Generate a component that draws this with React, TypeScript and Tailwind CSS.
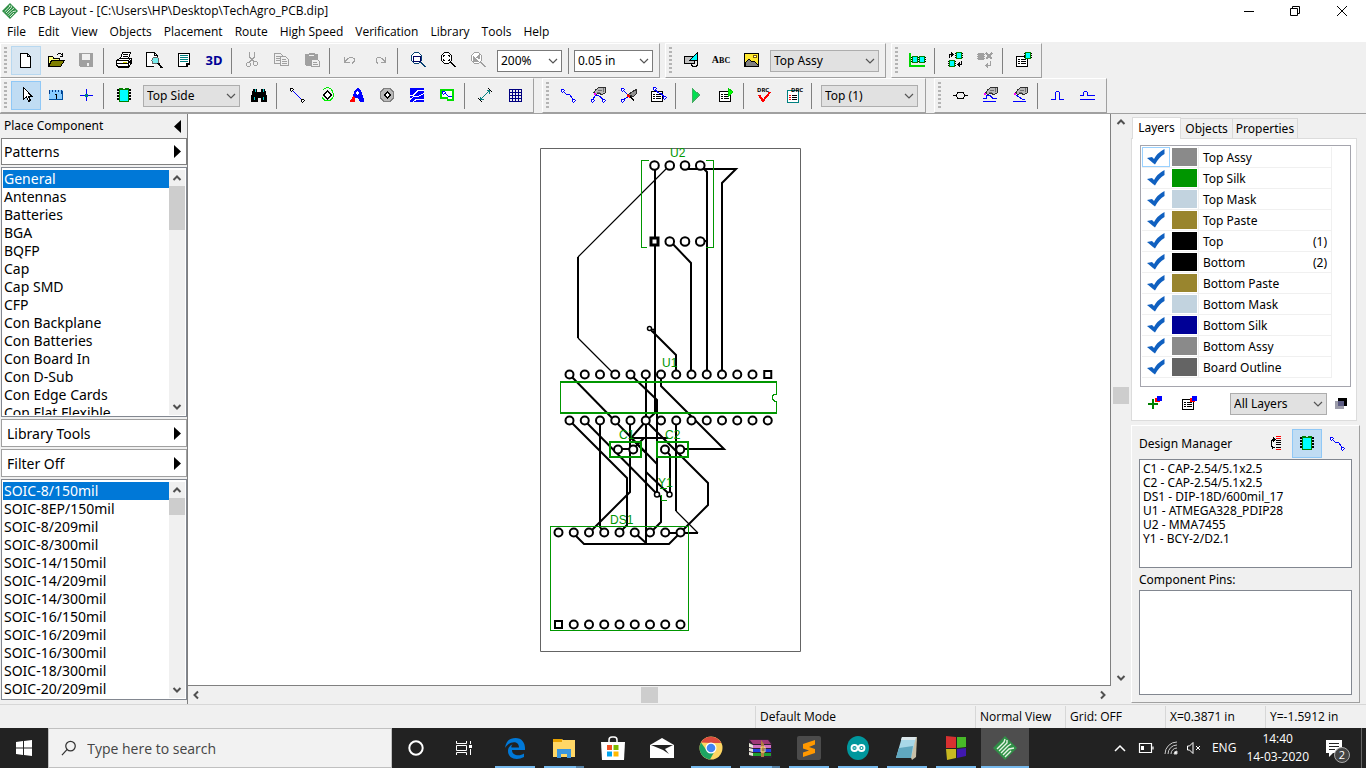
import type { ReactNode } from "react";
import clsx from "clsx";

const UI_FONT = "font-['Open_Sans','Noto_Sans',sans-serif]";
const LIST_FONT = "font-['Noto_Sans','Open_Sans',sans-serif]";

const menus = [
  "File",
  "Edit",
  "View",
  "Objects",
  "Placement",
  "Route",
  "High Speed",
  "Verification",
  "Library",
  "Tools",
  "Help",
];

const categories = [
  "General",
  "Antennas",
  "Batteries",
  "BGA",
  "BQFP",
  "Cap",
  "Cap SMD",
  "CFP",
  "Con Backplane",
  "Con Batteries",
  "Con Board In",
  "Con D-Sub",
  "Con Edge Cards",
  "Con Flat Flexible",
];

const patterns = [
  "SOIC-8/150mil",
  "SOIC-8EP/150mil",
  "SOIC-8/209mil",
  "SOIC-8/300mil",
  "SOIC-14/150mil",
  "SOIC-14/209mil",
  "SOIC-14/300mil",
  "SOIC-16/150mil",
  "SOIC-16/209mil",
  "SOIC-16/300mil",
  "SOIC-18/300mil",
  "SOIC-20/209mil",
];

const layers = [
  { name: "Top Assy", color: "bg-[#8a8a8a]" },
  { name: "Top Silk", color: "bg-[#009600]" },
  { name: "Top Mask", color: "bg-[#c2d3df]" },
  { name: "Top Paste", color: "bg-[#99852e]" },
  { name: "Top", color: "bg-black", index: "(1)" },
  { name: "Bottom", color: "bg-black", index: "(2)" },
  { name: "Bottom Paste", color: "bg-[#99852e]" },
  { name: "Bottom Mask", color: "bg-[#c2d3df]" },
  { name: "Bottom Silk", color: "bg-[#000096]" },
  { name: "Bottom Assy", color: "bg-[#8a8a8a]" },
  { name: "Board Outline", color: "bg-[#646464]" },
];

const components = [
  "C1 - CAP-2.54/5.1x2.5",
  "C2 - CAP-2.54/5.1x2.5",
  "DS1 - DIP-18D/600mil_17",
  "U1 - ATMEGA328_PDIP28",
  "U2 - MMA7455",
  "Y1 - BCY-2/D2.1",
];

/* ---------- icons ---------- */

const smallChip = (x: number, y: number, fill: string, line: string) => (
  <>
    <path
      d={`M${x - 1} ${y + 1.5}h8M${x - 1} ${y + 3.5}h8M${x - 1} ${y + 5.5}h8`}
      stroke={line === "#a0a0a0" ? line : "#000"}
    />
    <rect x={x + 0.5} y={y + 0.5} width="5" height="6" fill={fill} stroke={line} />
  </>
);

const sheet = (
  <>
    <path d="M2.5 5.5h11v10h-11z" fill="#fff" stroke="#000" />
    <path d="M4 8.5h2M7 8.5h5M4 10.5h2M7 10.5h5M4 12.5h2M7 12.5h5" stroke="#000" />
  </>
);

const hand = (
  <>
    <path d="M5 6.5l2-3 3-2h6.5v5l-3 2-4-1-3 1z" fill="#b8b8b8" stroke="#303030" />
    <path d="M9 4.5h4M8 6.5h3M14.5 2v4" stroke="#707070" />
  </>
);

/* small open node drawn at a track end */
const node = (x: number, y: number, color: string) => (
  <rect x={x - 1.5} y={y - 1.5} width="3" height="3" rx="1" fill="#fff" stroke={color} />
);

const lens = (color: string, inner: ReactNode) => (
  <>
    <circle cx="7.5" cy="7" r="5.5" fill="#fff" stroke={color} />
    <path d="M11.5 11l5 5" stroke={color} strokeWidth="2" />
    {inner}
  </>
);

const icons: Record<string, ReactNode> = {
  newFile: <path d="M3.5 2.5h7l3 3v11h-10zM10.5 2.5v3h3" fill="#fff" stroke="#000" />,
  open: (
    <>
      <path d="M1.5 15.5v-10h4l1 1.5h6v2.5" fill="#ffff80" stroke="#000" />
      <path d="M1.5 15.5l3-6h13l-4 6z" fill="#808000" stroke="#000" />
      <path d="M9.5 4.5l2-2h2l2 2M15.5 2v3h-3" fill="none" stroke="#000" />
    </>
  ),
  save: (
    <>
      <path d="M2 2h14v14H3l-1-1z" fill="#a0a0a0" />
      <path d="M5 3h8v6H5zM10 12h2v3h-2z" fill="#f0f0f0" />
    </>
  ),
  print: (
    <>
      <path d="M5.5 7.5l2-6h8l-2 6" fill="#fff" stroke="#000" />
      <path d="M8 3.5h5M7.5 5.5h5" stroke="#000" />
      <path d="M1.5 9.5l3-2h12v5l-3 3.5h-10l-2-2z" fill="#fff" stroke="#000" />
      <path d="M2 9.5h11l3-2M2 12.5h11l3-3M13.5 10v6M15 9v4" stroke="#000" fill="none" />
      <path d="M4 15.5h9" stroke="#000" strokeWidth="2" />
      <path d="M8 11h4" stroke="#dd0" />
    </>
  ),
  preview: (
    <>
      <path d="M9 15.5H1.5v-14h8l3 3v3M9.5 1.5v3h3" fill="#fff" stroke="#000" />
      <circle cx="10.5" cy="9.5" r="3.5" fill="#7ee" stroke="#666" />
      <path d="M13 12l4 5" stroke="#000" strokeWidth="2" />
    </>
  ),
  report: (
    <>
      <path d="M3.5 2.5h11v11h-2v2h-9z" fill="#fff" stroke="#000" />
      <path d="M5 4.5h8M5 6.5h8M5 8.5h8M5 10.5h8" stroke="#008080" />
      <path d="M3 15.5h9M11.5 15v-2.5h3" fill="none" stroke="#000" />
    </>
  ),
  cut: (
    <>
      <path d="M6.5 1v5l5 5M11.5 1v5l-5 5" fill="none" stroke="#a0a0a0" />
      <circle cx="5.5" cy="13.5" r="2" fill="none" stroke="#a0a0a0" />
      <circle cx="12.5" cy="12.5" r="2" fill="none" stroke="#a0a0a0" />
    </>
  ),
  copy: (
    <>
      <path d="M1.5 2.5h6l2 2v8h-8zM3 5.5h4M3 7.5h5M3 9.5h5" fill="none" stroke="#a0a0a0" />
      <path d="M7.5 5.5h5l3 3v6h-8z" fill="#f0f0f0" stroke="#a0a0a0" />
      <path d="M9 8.5h4M9 10.5h5M9 12.5h5" stroke="#a0a0a0" />
    </>
  ),
  paste: (
    <>
      <path d="M2 3h4l1-1.5h4L12 3h3v6H8v6H3l-1-1z" fill="#a0a0a0" />
      <path d="M8.5 8.5h6l2 2v5h-8z" fill="#f0f0f0" stroke="#a0a0a0" />
      <path d="M10 11.5h4M10 13.5h5" stroke="#a0a0a0" />
      <path d="M6 4.5h5" stroke="#f0f0f0" />
    </>
  ),
  undo: <path d="M3.5 6v5h5M4 10.5l3-3q1-1 3-1t3 1v3l-2 2" fill="none" stroke="#a0a0a0" />,
  redo: <path d="M14.5 6v5h-5M14 10.5l-3-3q-1-1-3-1T5 7.5v3l2 2" fill="none" stroke="#a0a0a0" />,
  zoomWindow: lens("#064070", <path d="M4 5h7v5H4z" fill="#fff" stroke="#000060" strokeWidth="1" />),
  zoomFit: lens("#000", <path d="M4.5 6V4.5H6M10.5 6V4.5H9M4.5 8v1.5H6M10.5 8v1.5H9" fill="none" stroke="#000" />),
  zoomPrev: lens("#a0a0a0", <path d="M4 5v5h5zM7 7l3-3v4" fill="#a0a0a0" stroke="#a0a0a0" />),
  shapes: (
    <>
      <circle cx="12.5" cy="12" r="3.5" fill="#e8e8e8" stroke="#000" />
      <path d="M2.5 5.5h10v7h-10z" fill="#c0c0c0" stroke="#000" />
      <path d="M15.5 1.5v8h-8z" fill="#0ff" stroke="#000" />
    </>
  ),
  image: (
    <>
      <path d="M2.5 2.5h14v13h-14z" fill="#ffe830" stroke="#000" />
      <path d="M3 15v-3l4-4 3 3 2-1 4 4v1z" fill="#808080" stroke="#000" />
      <circle cx="13" cy="5.5" r="1.5" fill="#fff" stroke="#806000" />
    </>
  ),
  chipsLine: (
    <>
      <path d="M2 2v13h15" fill="none" stroke="#00d800" strokeWidth="2" />
      {smallChip(4, 5, "#0ff", "#008000")}
      {smallChip(11, 5, "#0ff", "#008000")}
    </>
  ),
  swapChips: (
    <>
      {smallChip(10, 1, "#0ff", "#008000")}
      {smallChip(3, 9, "#0ff", "#008000")}
      <path d="M3.5 7V3.5H7M5 1.5l2 2-2 2M15.5 10v3.5H12M14 11.5l-2 2 2 2" fill="none" stroke="#000" />
    </>
  ),
  swapChipsOff: (
    <>
      {smallChip(2, 2, "#a0a0a0", "#a0a0a0")}
      <path d="M10 2l6 6M16 2l-6 6M11 5h4" stroke="#a0a0a0" strokeWidth="2" />
      <path d="M14.5 10v4.5H11M12 12.5l-2 2 2 2" fill="none" stroke="#a0a0a0" />
    </>
  ),
  chipSheet: (
    <>
      {sheet}
      {smallChip(11, 1, "#0ff", "#008000")}
    </>
  ),
  pointer: <path d="M6.5 1.5v12l3-3 2 5 2-1-2-4h3.5z" fill="#fff" stroke="#000" />,
  ruler: (
    <>
      <path d="M2 4h14v10H2z" fill="#8cf" />
      <path d="M2.5 4v4M5.5 4v2M8.5 4v2M11.5 4v2M14.5 4v4" fill="none" stroke="#003c8c" />
      <path d="M8 8.5h1.5v4" fill="none" stroke="#000" />
      <path d="M2 13.5h13.5V5" fill="none" stroke="#0050a0" />
    </>
  ),
  origin: (
    <>
      <path d="M9.5 3v12M3 9.5h13" stroke="#00f" />
      <path d="M8 8h3v3H8z" fill="#008080" />
    </>
  ),
  chip: (
    <>
      <path d="M2 4h14M2 7h14M2 10h14M2 13h14" stroke="#000" strokeWidth="2" />
      <path d="M4 2h4v1h2V2h4v14H4z" fill="#008000" />
      <path d="M5 4h8v11H5z" fill="#0ff" />
    </>
  ),
  binoculars: (
    <>
      <path d="M3 3h4v3h4V3h4l2 8v5h-6v-4H8v4H1v-5z" fill="#000" />
      <path d="M5.5 3v3M13.5 3v3M4.5 11v3M13.5 11v3" stroke="#0cc" />
    </>
  ),
  track: (
    <>
      <path d="M4 4l10 10" stroke="#00f" />
      {node(3.5, 3.5, "#000")}
      {node(14.5, 14.5, "#000")}
    </>
  ),
  viaGreen: (
    <>
      <path d="M5 4q3-4 8-1 3 3 2 8-1 3-5 4-4 0-6-4" fill="none" stroke="#0e0" />
      <path d="M9.5 5l4 4-4 4-4-4z" fill="#fff" stroke="#000" strokeWidth="2" />
    </>
  ),
  trackTri: (
    <>
      <path d="M7 6l-3 6-2 2v2h5v-4z" fill="#f00" />
      <path d="M5 9l2-5 2-2h2l2 3 3 8v3h-4l-2-4H7z" fill="#00f" />
      <path d="M9.5 5l2 2-2 2-2-2z" fill="#fff" />
    </>
  ),
  viaGray: (
    <>
      <path d="M6 2.5h6l3.500 3.500v6l-3.500 3.500H6L2.500 12V6z" fill="#b8b8b8" stroke="#808080" />
      <path d="M9 5l4 4-4 4-4-4z" fill="#000" />
      <path d="M9 7l2 2-2 2-2-2z" fill="#fff" />
    </>
  ),
  copper: (
    <>
      <path d="M2 2h14v14H2z" fill="#00f" />
      <path d="M2 9.5h3l5-5h6M2 13.5l4-3h4l6-3M5 16l4-3h7" fill="none" stroke="#fff" />
    </>
  ),
  boardShape: (
    <>
      <path d="M3 4h12v10h-5l-1-2H3z" fill="#fff" stroke="#00e000" strokeWidth="2" />
      <path d="M6 6l4 4h4" fill="none" stroke="#00f" />
      {node(5.5, 6.5, "#00f")}
    </>
  ),
  dimension: (
    <>
      <path d="M4 14L14 4M4.5 10.5v3h3M13.5 7.5v-3h-3" fill="none" stroke="#008080" />
      <path d="M2 12l4 4M12 2l4 4" stroke="#000" />
    </>
  ),
  grid: (
    <path
      d="M3.5 3.5h12v12h-12zM3 6.5h13M3 9.5h13M3 12.5h13M6.5 3v13M9.5 3v13M12.5 3v13"
      fill="none"
      stroke="#000080"
    />
  ),
  route: (
    <>
      <path d="M4 5l3 3h3l4 5" fill="none" stroke="#00f" />
      {node(3.5, 4.5, "#00f")}
      {node(14.5, 14.5, "#00f")}
    </>
  ),
  routeHand: (
    <>
      {hand}
      <path d="M4 13l3-4h2l6 5" fill="none" stroke="#00f" />
      {node(3.5, 14.5, "#00f")}
      {node(14.5, 14.5, "#00f")}
      <path d="M5 7h2v2H5z" fill="#f0f" />
    </>
  ),
  unroute: (
    <>
      <path d="M9.5 8.5l4-3 4-2v4l-3 3-4-1z" fill="#909090" stroke="#303030" />
      <path d="M4 4l5 5M4 14l6-4" stroke="#00f" />
      {node(3.5, 3.5, "#00f")}
      {node(3.5, 14.5, "#00f")}
      <path d="M8 9l3 2" stroke="#f00" strokeWidth="2" />
      <path d="M11 11l4 3" stroke="#000" strokeWidth="1.5" />
    </>
  ),
  routeSheet: (
    <>
      {sheet}
      <path d="M6 4l4 3h2l3 4" fill="none" stroke="#00f" />
      {node(5.5, 2.5, "#00f")}
      {node(15.5, 11.5, "#00f")}
    </>
  ),
  run: <path d="M5.500 2.500l7 6.500-7 7z" fill="#00e050" stroke="#40b060" />,
  runSheet: (
    <>
      {sheet}
      <path d="M11 2l5 4-5 5z" fill="#0f0" stroke="#00d000" />
    </>
  ),
  drcCheck: <path d="M4 9l4 6 7-9" fill="none" stroke="#f00" strokeWidth="2" />,
  drcSheet: (
    <>
      <path d="M2.5 4.5h11v12h-11z" fill="#fff" stroke="#008080" />
      <path d="M4 9.5h2M4 11.5h2M4 13.5h2" stroke="#f00" />
      <path d="M7 9.5h5M7 11.5h5M7 13.5h5" stroke="#000" />
    </>
  ),
  diffPair: <path d="M2 9.5h3l2-3h5l2 3h3M5 9.5l2 3h5l2-3" fill="#f0f0f0" stroke="#000" />,
  pairHand: (
    <>
      {hand}
      <path d="M2 12.5h3l1-3h3l3 3h4M2 15.5h13" fill="none" stroke="#00f" />
      <path d="M3 7h2v2H3z" fill="#f0f" />
    </>
  ),
  pairHandAlt: (
    <>
      {hand}
      <path d="M5 9l6 4h3M2 15.5h13" fill="none" stroke="#00f" />
      <path d="M3 7h2v2H3z" fill="#f0f" />
    </>
  ),
  meander: <path d="M2 13.5h4.500v-7l1-1h2l1 1v7H15" fill="none" stroke="#00f" />,
  meanderPair: <path d="M1 9.5h3.500v-3l1-1h2l1 1v3H16M1 13.5h15" fill="none" stroke="#00f" />,
  addLayer: (
    <>
      <path d="M7 5v10M2 10h10" stroke="#008000" strokeWidth="2" />
      <path d="M9 4h5v4H9z" fill="#f00" />
      <path d="M11 2h5v5h-5z" fill="#00f" />
    </>
  ),
  layerSheet: (
    <>
      {sheet}
      <path d="M10 4h5v4h-5z" fill="#f00" />
      <path d="M12 2h5v5h-5z" fill="#00f" />
    </>
  ),
  overlap: (
    <>
      <path d="M7 3h9v8H7z" fill="#000" />
      <path d="M4 6h9v8H4z" fill="#9c9caa" />
      <path d="M7 6h6v5H7z" fill="#5c5c84" />
    </>
  ),
  sortList: (
    <>
      <path d="M8 2.5h5M8 4.5h5M8 15.5h5" stroke="#f00" />
      <path d="M8 6.5h5M8 8.5h5M8 10.5h5M8 13.5h5" stroke="#000" />
      <path d="M6 5.5H4.5l-1 2v4l1 2H7M5 3.5l2 2-2 2M4 15l2-2" fill="none" stroke="#000" />
    </>
  ),
};

const Icon = ({ name }: { name: string }) => (
  <svg viewBox="0 0 18 18" className="size-[18px] shrink-0" shapeRendering="crispEdges" aria-hidden="true">
    {icons[name]}
  </svg>
);

const Chevron = ({ className }: { className?: string }) => (
  <svg viewBox="0 0 10 6" className={clsx("h-1.5 w-2.5", className)} aria-hidden="true">
    <path d="M1 1l4 4 4-4" fill="none" stroke="#555" strokeWidth="1.200" />
  </svg>
);

/* ---------- toolbar parts ---------- */

type ToolProps = { label: string; icon?: string; state?: "hot" | "on"; children?: ReactNode };

const Tool = ({ label, icon, state, children }: ToolProps) => (
  <button
    aria-label={label}
    className={clsx(
      "flex h-[29px] w-[30px] shrink-0 items-start justify-center border pt-1",
      state === "on" && "border-[#90c8f6] bg-[#c0dcf3]",
      state === "hot" && "border-[#b8d8f0] bg-[#d8e6f2]",
      !state && "border-transparent"
    )}
  >
    {icon && <Icon name={icon} />}
    {children}
  </button>
);

const Sep = () => (
  <div className="w-2 shrink-0 pl-0.5">
    <div className="h-[26px] w-px bg-[#808080]" />
  </div>
);

const Band = ({ children }: { children: ReactNode }) => (
  <div className="flex h-[35px] shrink-0 items-center border-b border-r border-b-[#a0a0a0] border-r-[#a0a0a0] border-l border-t border-l-white border-t-white px-[3px]">
    <div className="mr-1 h-[27px] w-[3px] bg-[repeating-linear-gradient(180deg,#b4b4b4_0_2px,transparent_2px_4px)]" />
    {children}
  </div>
);

type DropProps = { label: string; value: string; className?: string; flat?: boolean };

const Drop = ({ label, value, className, flat }: DropProps) => (
  <label className={clsx("relative block shrink-0", className)}>
    <span className="sr-only">{label}</span>
    <select
      className={clsx(
        "block h-[22px] w-full appearance-none border pl-[3px] text-[12px] leading-5 text-black",
        flat ? "border-[#adadad] bg-[#e1e1e1]" : "border-[#7a7a7a] bg-white"
      )}
    >
      <option>{value}</option>
    </select>
    <Chevron className="pointer-events-none absolute right-1 top-2" />
  </label>
);

/* ---------- scroll bars ---------- */

const ScrollArrow = ({ label, path }: { label: string; path: string }) => (
  <button aria-label={label} className="flex size-4 shrink-0 items-center justify-center">
    <svg viewBox="0 0 10 10" className="size-2.5">
      <path d={path} fill="none" stroke="#505050" strokeWidth="2" />
    </svg>
  </button>
);

const UP = "M1.5 7L5 3.5 8.5 7";
const DOWN = "M1.5 3L5 6.5 8.5 3";
const LEFT = "M7 1.5L3.5 5 7 8.5";
const RIGHT = "M3 1.5L6.5 5 3 8.5";

const VScroll = ({ thumb }: { thumb: string }) => (
  <div className="flex w-4 shrink-0 flex-col bg-[#f0f0f0]">
    <ScrollArrow label="Scroll up" path={UP} />
    <div className="flex-1">
      <div className={clsx("w-full bg-[#cdcdcd]", thumb)} />
    </div>
    <ScrollArrow label="Scroll down" path={DOWN} />
  </div>
);

const PickList = ({ items, thumb, className }: { items: string[]; thumb: string; className: string }) => (
  <div className={clsx("flex min-h-0 border border-[#828790] bg-white p-px pt-0.5", className)}>
    <ul className="min-w-0 flex-1 overflow-hidden">
      {items.map((item, i) => (
        <li key={item}>
          <button
            className={clsx(
              "block h-[18px] w-full pl-px text-left text-[14px] leading-[18px] whitespace-nowrap",
              i === 0 && "bg-[#0078d7] text-white"
            )}
          >
            {item}
          </button>
        </li>
      ))}
    </ul>
    <VScroll thumb={thumb} />
  </div>
);

const FoldButton = ({ label, className }: { label: string; className?: string }) => (
  <button
    className={clsx(
      "flex w-full shrink-0 items-center justify-between border bg-white pr-[5px] text-[14px]",
      className
    )}
  >
    {label}
    <svg viewBox="0 0 7 13" className="h-[13px] w-[7px]">
      <path d="M0 0l7 6.500L0 13z" />
    </svg>
  </button>
);

const PlacePanel = () => (
  <aside className="flex w-[188px] shrink-0 flex-col border-r border-[#808080] bg-[#f0f0f0] pb-1 pl-px">
    <div className="flex h-6 shrink-0 items-center justify-between pl-[3px] pr-1.5 text-[12px]">
      Place Component
      <button aria-label="Collapse">
        <svg viewBox="0 0 7 13" className="h-[13px] w-[7px]">
          <path d="M7 0L0 6.500 7 13z" />
        </svg>
      </button>
    </div>
    <FoldButton label="Patterns" className="h-[27px] border-[#808080] pl-0.5" />
    <PickList items={categories} thumb="h-[44px]" className="mt-0.5 h-[250px]" />
    <FoldButton label="Library Tools" className="mt-0.5 h-7 border-[#a0a0a0] pl-[5px]" />
    <FoldButton label="Filter Off" className="mt-0.5 h-7 border-[#a0a0a0] pl-[5px]" />
    <PickList items={patterns} thumb="h-[17px]" className="mt-0.5 flex-1" />
  </aside>
);

/* ---------- board ---------- */

const PITCH = 15.25;

type PadRowProps = { x: number; y: number; count: number; square?: number; r?: number };

const PadRow = ({ x, y, count, square, r = 4 }: PadRowProps) => (
  <g fill="#fff" stroke="#000" strokeWidth="2">
    {Array.from({ length: count }, (_, i) =>
      i === square ? (
        <rect key={i} x={x + i * PITCH - 3.5} y={y - 3.5} width="7" height="7" strokeWidth={r > 4 ? 3 : 2} />
      ) : (
        <circle key={i} cx={x + i * PITCH} cy={y} r={r} />
      )
    )}
  </g>
);

const traces = [
  "M655 165V413L646 421",
  "M685 169H736L722 183V374",
  "M700 165L707 172V374",
  "M670 241L691 263V374",
  "M700 241H707",
  "M578 257V338",
  "M650 329L676 355V374",
  "M569.5 374.5L657 464",
  "M584.5 420.5L657 494",
  "M569.5 420.5L627 478V525L619 533",
  "M600 420V527L604 533",
  "M630 420V492L589 533",
  "M630.5 374.5L657 400V494",
  "M646 374V544",
  "M661 374V386L724 449H681",
  "M646 421L631 438H668",
  "M618 449H633L644 438",
  "M631 438L646 453",
  "M646 421L708 483V505L669 544H584L573 533",
  "M635 533L646 543",
  "M676 420V511",
  "M665 533H698",
  "M665 449L670 455V494",
  "M646 472L669 494",
  "M657 494L661 497V522L650 533",
];

const Board = () => (
  <svg
    viewBox="540 148 262 505"
    className="h-[505px] w-[262px] shrink-0 font-['Liberation_Sans',sans-serif]"
    role="img"
    aria-label="Board"
  >
    <path d="M540.5 148.5h260v503h-260z" fill="#fff" stroke="#646464" />
    <g fill="none" stroke="#000" strokeWidth="2">
      {traces.map((d) => (
        <path key={d} d={d} />
      ))}
    </g>
    <path d="M670 165L578 257M578 338L613 373M676 511L698 533" fill="none" stroke="#000" strokeWidth="1.200" />

    <PadRow x={654.5} y={165.5} count={4} r={4.3} />
    <PadRow x={654.5} y={241.5} count={4} square={0} r={4.3} />
    <PadRow x={569.5} y={374.5} count={14} square={13} />
    <PadRow x={569.5} y={420.5} count={14} />
    <PadRow x={618} y={449.5} count={2} />
    <PadRow x={665} y={449.5} count={2} />
    <PadRow x={558.5} y={532.5} count={9} />
    <PadRow x={558.5} y={624.5} count={9} square={0} />
    <g fill="#fff" stroke="#000" strokeWidth="1.500">
      <circle cx="657" cy="494.500" r="2.500" />
      <circle cx="669.500" cy="494.500" r="2.500" />
      <circle cx="649.500" cy="328.500" r="2" />
      <circle cx="653" cy="330.500" r="1.200" />
    </g>

    <g fill="none" stroke="#009600" shapeRendering="crispEdges">
      <path d="M649 160.5h-7.500v86.500h5.500M706 160.5h7.500v86.500h-7.500" />
      <path d="M776.5 394v-12h-216v31h216v-12M776.5 394h-2l-2 2v3l2 2h2" />
      <path d="M560 382h217M560 413h217" strokeWidth="2" />
      <path d="M610 442h31v15h-31zM657 442h31v15h-31z" strokeWidth="2" />
      <path d="M550.5 526.5h138v104h-138zM660 488.5h7M661.5 495v5h5" />
    </g>
    <g fill="#009600" fontSize="12">
      <text x="670" y="157">U2</text>
      <text x="662" y="367">U1</text>
      <text x="619" y="439">C1</text>
      <text x="665" y="439">C2</text>
      <text x="658" y="487">Y1</text>
      <text x="610" y="524">DS1</text>
    </g>
  </svg>
);

/* ---------- right side ---------- */

const Check = () => (
  <svg viewBox="0 0 18 16" className="h-4 w-[18px]" aria-hidden="true">
    <path d="M0 9l5-1 2 2Q10 4 17.500 0v5Q12 8 8 15.500L6 14z" fill="#1060c0" />
  </svg>
);

const LayersPanel = () => (
  <section>
    <div role="tablist" className="flex items-end pl-px text-[12px]">
      <button
        role="tab"
        aria-selected="true"
        className="relative z-10 -mb-px h-[22px] w-[49px] border border-b-0 border-[#dcdcdc] bg-white pb-0.5"
      >
        Layers
      </button>
      <button role="tab" className="h-5 w-[52px] border border-b-0 border-l-0 border-[#d9d9d9]">
        Objects
      </button>
      <button role="tab" className="h-5 w-[65px] border border-b-0 border-l-0 border-[#d9d9d9]">
        Properties
      </button>
    </div>
    <div className="mr-[3px] h-[283px] border border-[#dcdcdc] bg-white pl-2 pr-[5px] pt-1.5">
      <ul className="h-[242px] border border-[#a5a5ad] p-px text-[12px]">
        {layers.map((layer, i) => (
          <li key={layer.name} className="mr-[17px] flex h-[21px] items-center border-b border-r border-[#f0f0f0]">
            <label className="flex h-full flex-1 items-center">
              <input type="checkbox" defaultChecked className="sr-only" />
              <span
                className={clsx(
                  "flex h-full w-7 items-center justify-center border",
                  i === 0 ? "border-[#99d1ff]" : "border-transparent"
                )}
              >
                <Check />
              </span>
              <span className={clsx("ml-0.5 h-[18px] w-[25px]", layer.color)} />
              <span className="ml-px h-full w-px bg-[#f0f0f0]" />
              <span className="flex-1 pl-1 pt-px">{layer.name}</span>
              <span className="pr-1 pt-px">{layer.index}</span>
            </label>
          </li>
        ))}
      </ul>
      <div className="flex items-center pt-0.5">
        <Tool label="Add layer" icon="addLayer" />
        <div className="w-1" />
        <Tool label="Layer setup" icon="layerSheet" />
        <div className="flex-1" />
        <Drop label="Visible layers" value="All Layers" flat className="w-[97px]" />
        <button aria-label="Contrast mode" className="ml-1 mr-0.5">
          <Icon name="overlap" />
        </button>
      </div>
    </div>
  </section>
);

const DesignManager = () => (
  <section className="mt-1 flex flex-1 flex-col border-b border-r border-l border-t border-b-[#a0a0a0] border-r-[#a0a0a0] border-l-white border-t-white px-[7px] pb-[7px] pt-[3px] text-[12px]">
    <div className="flex items-center">
      <h2 className="flex-1 whitespace-nowrap">Design Manager</h2>
      <Tool label="Sort" icon="sortList" />
      <Tool label="Components" icon="chip" state="on" />
      <Tool label="Nets" icon="route" />
    </div>
    <ul className="mt-px h-[109px] border border-[#828790] bg-white px-[3px] py-0.5 leading-[14px]">
      {components.map((c) => (
        <li key={c}>{c}</li>
      ))}
    </ul>
    <h3 className="h-[22px] leading-[23px]">Component Pins:</h3>
    <div className="flex-1 border border-[#828790] bg-white" />
  </section>
);

/* ---------- taskbar ---------- */

const Logo = () => (
  <>
    <path d="M12 0l12 12-12 12L0 12z" fill="#2f8f46" />
    <path
      d="M4 13l7-7 1-3M6 15l8-8V4M8 17l7-7 3-2M10 19l6-6 5-1M12 21l6-6"
      fill="none"
      stroke="#e4f4e4"
      strokeWidth="1.400"
    />
  </>
);

const apps: { name: string; open?: boolean; active?: boolean; stacked?: boolean; art: ReactNode }[] = [
  {
    name: "Edge",
    open: true,
    art: (
      <path
        d="M2 12C3 5 7 2 12.500 2 19 2 22 7 22 12v2H9c0 6 8 6.500 12 3.500V21c-7 4-16 2-16-6 0-4 3-6 5-7-1 1-2 2-1.500 3.500H16C16 4 6 5 2 12z"
        fill="#0078d7"
      />
    ),
  },
  {
    name: "File Explorer",
    open: true,
    stacked: true,
    art: (
      <>
        <path d="M1 3h9l1 1h12v17H1z" fill="#ffd766" />
        <path d="M1 3h9v3H1z" fill="#e8a200" />
        <path d="M5 22v-9h14v9h-4v-4H9v4z" fill="#3a96dd" />
      </>
    ),
  },
  {
    name: "Store",
    art: (
      <>
        <path d="M8 6V4q0-3 3-3h2q3 0 3 3v2" fill="none" stroke="#fff" strokeWidth="1.500" />
        <path d="M0 6h24l-1 18H1z" fill="#fff" />
        <path d="M6 9h5v5H6z" fill="#f25022" />
        <path d="M12.500 9h5v5h-5z" fill="#7fba00" />
        <path d="M6 15.500h5v5H6z" fill="#00a4ef" />
        <path d="M12.500 15.500h5v5h-5z" fill="#ffb900" />
      </>
    ),
  },
  {
    name: "Mail",
    art: (
      <>
        <path d="M0 9l12-7 12 7v13H0z" fill="#fff" />
        <path d="M1 9h22l-8 4 4 5-6-4z" fill="#222" />
      </>
    ),
  },
  {
    name: "Chrome",
    open: true,
    art: (
      <>
        <circle cx="12" cy="12" r="11.500" fill="#fdd663" />
        <path d="M2 6.500A11.500 11.500 0 0 1 22.300 7H12z" fill="#dd4b3e" />
        <path d="M2 6.500A11.500 11.500 0 0 0 11 23.500l5-9-9-1z" fill="#1da462" />
        <circle cx="12" cy="12" r="5.500" fill="#fff" />
        <circle cx="12" cy="12" r="4.300" fill="#4285f4" />
      </>
    ),
  },
  {
    name: "WinRAR",
    open: true,
    stacked: true,
    art: (
      <>
        <path d="M1 3h19l4 4v15H4l-3-3z" fill="#302030" />
        <path d="M2 4h18l3 4H5z" fill="#a03878" />
        <path d="M5 9h18v3H5z" fill="#d070c0" />
        <path d="M5 13h18v3H5z" fill="#2040e0" />
        <path d="M5 17h18v3H5z" fill="#20a030" />
        <path d="M1 7l4 2v3l-4-1zM1 12l4 1v3l-4-1zM1 16l4 1v3l-4-1z" fill="#e8e8d8" />
        <path d="M13 4l3 4v13h-3z" fill="#b08040" />
        <path d="M13 11h4v5h-4z" fill="none" stroke="#ffe080" />
      </>
    ),
  },
  {
    name: "Sublime Text",
    open: true,
    art: (
      <>
        <rect width="24" height="24" rx="2" fill="#4b4b4b" />
        <path d="M18 4v4.500L12 11l6 2v4L6 21v-4.500l6-2-6-2V8z" fill="#ff9800" />
      </>
    ),
  },
  {
    name: "Arduino",
    open: true,
    art: (
      <>
        <ellipse cx="12" cy="12" rx="11" ry="12" fill="#00979d" />
        <circle cx="8.500" cy="12" r="3" fill="none" stroke="#fff" strokeWidth="1.800" />
        <circle cx="15.500" cy="12" r="3" fill="none" stroke="#fff" strokeWidth="1.800" />
        <path d="M7.500 12h2M14.500 12h2M15.500 11v2" stroke="#fff" />
      </>
    ),
  },
  {
    name: "Notepad",
    open: true,
    art: (
      <>
        <path d="M7 1h15l-1 20-4 3z" fill="#c8c0a8" />
        <path d="M7 1h14l-5 21H1z" fill="#a8d8e8" />
        <path d="M4 12l14-2-2 12H1z" fill="#60a8c0" />
        <path d="M7 1h14l-1 3H6z" fill="#dce8ec" />
      </>
    ),
  },
  {
    name: "DipTrace Launcher",
    open: true,
    art: (
      <>
        <path d="M2 0l10 1v11H2z" fill="#d83030" />
        <path d="M13 1h9v10l-9 1z" fill="#48b828" />
        <path d="M2 13h10v9l-9 2z" fill="#c8b820" />
        <path d="M13 13l9-1v8l-9 2z" fill="#4018b0" />
      </>
    ),
  },
  { name: "DipTrace PCB", open: true, active: true, art: <Logo /> },
];

const Taskbar = () => (
  <footer className="flex h-10 shrink-0 bg-[#222] font-['Open_Sans',sans-serif] text-white">
    <button aria-label="Start" className="flex w-12 items-center justify-center">
      <svg viewBox="0 0 16 16" className="size-4" fill="#fff">
        <path d="M0 2l7-1v6.500H0zM8 1l8-1v7.500H8zM0 8.500h7V15l-7-1zM8 8.500h8V16l-8-1z" />
      </svg>
    </button>
    <label className="flex w-[344px] items-center border border-[#c0c0c0] bg-[#f2f2f2] pl-3">
      <svg viewBox="0 0 16 16" className="size-4" fill="none" stroke="#333" strokeWidth="1.300">
        <circle cx="10" cy="6" r="5" />
        <path d="M6.500 9.500L1 15.500" />
      </svg>
      <span className="sr-only">Search</span>
      <input
        placeholder="Type here to search"
        className="w-full bg-transparent pl-[11px] text-[14px] outline-none placeholder:text-[#444]"
      />
    </label>
    <button aria-label="Cortana" className="flex w-12 items-center justify-center">
      <svg viewBox="0 0 16 16" className="size-4">
        <circle cx="8" cy="8" r="6.700" fill="none" stroke="#fff" strokeWidth="2" />
      </svg>
    </button>
    <button aria-label="Task View" className="mr-[3px] flex w-12 items-center justify-center">
      <svg viewBox="0 0 16 16" className="size-4" fill="none" stroke="#fff">
        <path d="M.500 1v2.500h10V1M.500 5.500h10v5H.500zM.500 15v-2.500h10V15M14.500 1v3M14.500 9v6" />
        <path d="M13 5h3v3h-3z" fill="#fff" stroke="none" />
      </svg>
    </button>
    <nav className="flex gap-px">
      {apps.map((app) => (
        <button
          key={app.name}
          aria-label={app.name}
          className={clsx("relative flex w-12 items-center justify-center", app.active && "bg-[#4e4e4e]")}
        >
          <svg viewBox="0 0 24 24" className="size-6">
            {app.art}
          </svg>
          {app.open && (
            <span
              className={clsx(
                "absolute bottom-0 flex h-0.5 justify-end bg-[#76b9ed]",
                app.active ? "inset-x-0" : "inset-x-1"
              )}
            >
              {app.stacked && <span className="h-full w-2 bg-[#5580a4]" />}
            </span>
          )}
        </button>
      ))}
    </nav>
    <div className="ml-auto flex items-center text-[12px]">
      <button aria-label="Hidden icons" className="mr-3">
        <svg viewBox="0 0 12 8" className="h-2 w-3">
          <path d="M1 7l5-5 5 5" fill="none" stroke="#fff" strokeWidth="1.500" />
        </svg>
      </button>
      <button aria-label="Battery" className="mr-2.5">
        <svg viewBox="0 0 16 10" className="h-2.5 w-4" fill="none" stroke="#fff">
          <path d="M1.500.500h12v9h-12zM15 3.500v3" strokeWidth="1.200" />
          <path d="M3 3h3v4H3z" fill="#fff" stroke="none" />
        </svg>
      </button>
      <button aria-label="Network" className="mr-2">
        <svg viewBox="0 0 14 14" className="size-3.5" fill="none" stroke="#ccc">
          <path d="M1 13A12 12 0 0 1 13 1M4 13a9 9 0 0 1 9-9M7 13a6 6 0 0 1 6-6" />
          <path d="M10 13a3 3 0 0 1 3-3v3z" fill="#fff" />
        </svg>
      </button>
      <button aria-label="Volume" className="mr-2.5">
        <svg viewBox="0 0 16 12" className="h-3 w-4" fill="none" stroke="#fff">
          <path d="M1.500 4v4h2l3.500 3.500V.500L3.500 4zM10 4l4 4M14 4l-4 4" />
        </svg>
      </button>
      <span className="mr-2.5">ENG</span>
      <time className="mr-4 text-center leading-[18px]">
        14:40
        <br />
        14-03-2020
      </time>
      <button aria-label="Notifications" className="mr-2.5 mt-2">
        <svg viewBox="0 0 26 26" className="size-[26px]">
          <path d="M1 1h16v13H8l-4 4v-4H1z" fill="#fff" />
          <path d="M4 4.500h10M4 7.500h10M4 10.500h6" stroke="#222" />
          <circle cx="17" cy="16" r="7.500" fill="#444" stroke="#aaa" />
          <text x="17" y="20" fontSize="11" fill="#fff" textAnchor="middle">
            2
          </text>
        </svg>
      </button>
      <div className="mr-1 h-10 w-px bg-[#666]" />
    </div>
  </footer>
);

/* ---------- page ---------- */

const TitleBar = () => (
  <header className={clsx("flex h-[22px] shrink-0 items-center pl-0.5 text-[12px]", UI_FONT)}>
    <svg viewBox="0 0 24 24" className="mr-[5px] size-4">
      <Logo />
    </svg>
    <h1 className="flex-1">PCB Layout - [C:\Users\HP\Desktop\TechAgro_PCB.dip]</h1>
    <div className="flex">
      <button aria-label="Minimize" className="flex w-[46px] items-center justify-center">
        <svg viewBox="0 0 10 10" className="size-2.5" fill="none" stroke="#000">
          <path d="M0 5.500h10" />
        </svg>
      </button>
      <button aria-label="Restore" className="flex w-[46px] items-center justify-center">
        <svg viewBox="0 0 10 10" className="size-2.5" fill="none" stroke="#000">
          <path d="M.500 2.500h7v7h-7zM2.500 2.500v-2h7v7h-2" />
        </svg>
      </button>
      <button aria-label="Close" className="flex w-12 items-center justify-center">
        <svg viewBox="0 0 10 10" className="size-2.5" fill="none" stroke="#000">
          <path d="M0 0l10 10M10 0L0 10" />
        </svg>
      </button>
    </div>
  </header>
);

const Toolbars = () => (
  <div className="shrink-0 bg-[#f0f0f0] pt-px">
    <div className="flex gap-[5px]">
      <Band>
        <Tool label="New" icon="newFile" state="hot" />
        <Tool label="Open" icon="open" />
        <Tool label="Save" icon="save" />
        <Sep />
        <Tool label="Print" icon="print" />
        <Tool label="Print preview" icon="preview" />
        <Tool label="Titles" icon="report" />
        <Tool label="3D preview">
          <span className="text-[13px] leading-[18px] font-bold text-[#000096]">3D</span>
        </Tool>
        <Sep />
        <Tool label="Cut" icon="cut" />
        <Tool label="Copy" icon="copy" />
        <Tool label="Paste" icon="paste" />
        <Sep />
        <Tool label="Undo" icon="undo" />
        <Tool label="Redo" icon="redo" />
        <Sep />
        <Tool label="Zoom window" icon="zoomWindow" />
        <Tool label="Zoom to fit" icon="zoomFit" />
        <Tool label="Previous zoom" icon="zoomPrev" />
        <Drop label="Zoom" value="200%" className="mx-1 w-[65px]" />
        <Sep />
        <Drop label="Grid" value="0.05 in" className="mr-[3px] w-[79px]" />
      </Band>
      <Band>
        <Tool label="Shapes" icon="shapes" />
        <Tool label="Text">
          <span className="font-['Liberation_Serif',serif] text-[10px] leading-[18px] font-bold">
            A<span className="text-[8px]">BC</span>
          </span>
        </Tool>
        <Tool label="Image" icon="image" />
        <Drop label="Drawing layer" value="Top Assy" flat className="ml-1 mr-[3px] w-[109px]" />
      </Band>
      <Band>
        <Tool label="Arrange" icon="chipsLine" />
        <Sep />
        <Tool label="Auto placement" icon="swapChips" />
        <Tool label="Placement off" icon="swapChipsOff" />
        <Sep />
        <Tool label="Placement setup" icon="chipSheet" />
      </Band>
    </div>
    <div className="flex gap-2">
      <Band>
        <Tool label="Select" icon="pointer" state="on" />
        <Tool label="Measure" icon="ruler" />
        <Tool label="Origin" icon="origin" />
        <Sep />
        <Tool label="Place component" icon="chip" />
        <Drop label="Side" value="Top Side" flat className="mx-1 w-[97px]" />
        <Tool label="Find" icon="binoculars" />
        <Sep />
        <Tool label="Ratline" icon="track" />
        <Tool label="Pad" icon="viaGreen" />
        <Tool label="Net" icon="trackTri" />
        <Tool label="Via" icon="viaGray" />
        <Tool label="Copper pour" icon="copper" />
        <Tool label="Board outline" icon="boardShape" />
        <Sep />
        <Tool label="Dimension" icon="dimension" />
        <Tool label="Grid" icon="grid" />
      </Band>
      <Band>
        <Tool label="Route" icon="route" />
        <Tool label="Edit traces" icon="routeHand" />
        <Tool label="Unroute" icon="unroute" />
        <Tool label="Route setup" icon="routeSheet" />
        <Sep />
        <Tool label="Run autorouter" icon="run" />
        <Tool label="Autorouter setup" icon="runSheet" />
        <Sep />
        <Tool label="Check rules">
          <span className="relative">
            <Icon name="drcCheck" />
            <span className="absolute left-0.5 top-0 text-[6px] leading-[8px] font-bold">DRC</span>
          </span>
        </Tool>
        <Tool label="Rules setup">
          <span className="relative">
            <Icon name="drcSheet" />
            <span className="absolute left-1.5 top-0 text-[6px] leading-[8px] font-bold">DRC</span>
          </span>
        </Tool>
        <Sep />
        <Drop label="Route layer" value="Top (1)" flat className="mx-1 w-[97px]" />
      </Band>
      <Band>
        <Tool label="Differential pair" icon="diffPair" />
        <Tool label="Edit pair" icon="pairHand" />
        <Tool label="Edit pair trace" icon="pairHandAlt" />
        <Sep />
        <Tool label="Meander" icon="meander" />
        <Tool label="Pair meander" icon="meanderPair" />
      </Band>
    </div>
  </div>
);

const StatusBar = () => (
  <div
    className={clsx(
      "flex h-6 shrink-0 items-center justify-end border-t border-[#d7d7d7] bg-[#f0f0f0] pr-px text-[12px] leading-[22px]",
      UI_FONT
    )}
  >
    <span className="w-[220px] border-l border-[#d7d7d7] pl-1">Default Mode</span>
    <span className="w-[90px] border-l border-[#d7d7d7] pl-1">Normal View</span>
    <span className="w-[100px] border-l border-[#d7d7d7] pl-1">Grid: OFF</span>
    <span className="w-[100px] border-l border-[#d7d7d7] pl-1">X=0.3871 in</span>
    <span className="w-[100px] border-l border-[#d7d7d7] pl-1">Y=-1.5912 in</span>
  </div>
);

export default function App() {
  return (
    <div className={clsx("flex h-screen flex-col overflow-hidden bg-white text-black", LIST_FONT)}>
      <TitleBar />
      <nav className={clsx("flex h-5 shrink-0 items-center pl-px text-[12px]", UI_FONT)}>
        {menus.map((menu) => (
          <button key={menu} className="px-1.5">
            {menu}
          </button>
        ))}
      </nav>
      <Toolbars />
      <main className="flex min-h-0 flex-1 border-t border-[#a0a0a0] bg-[#f0f0f0]">
        <PlacePanel />
        <div className="flex min-w-0 flex-1 flex-col">
          <div className="flex min-h-0 flex-1 items-start justify-center border-b border-r border-[#808080] bg-white pl-11 pt-[34px]">
            <Board />
          </div>
          <div className="flex h-[18px] shrink-0 items-center">
            <ScrollArrow label="Scroll left" path={LEFT} />
            <div className="flex flex-1 justify-center">
              <div className="h-4 w-[17px] bg-[#cdcdcd]" />
            </div>
            <ScrollArrow label="Scroll right" path={RIGHT} />
          </div>
        </div>
        <div className="flex w-5 shrink-0 flex-col pb-[18px] pl-0.5">
          <div className="flex flex-1 flex-col">
            <ScrollArrow label="Scroll up" path={UP} />
            <div className="flex flex-1 items-center pb-2.5">
              <div className="h-[17px] w-4 bg-[#cdcdcd]" />
            </div>
            <ScrollArrow label="Scroll down" path={DOWN} />
          </div>
        </div>
        <aside className="mr-1.5 flex w-[229px] shrink-0 flex-col pb-px pt-[3px]">
          <LayersPanel />
          <DesignManager />
        </aside>
      </main>
      <StatusBar />
      <Taskbar />
    </div>
  );
}
